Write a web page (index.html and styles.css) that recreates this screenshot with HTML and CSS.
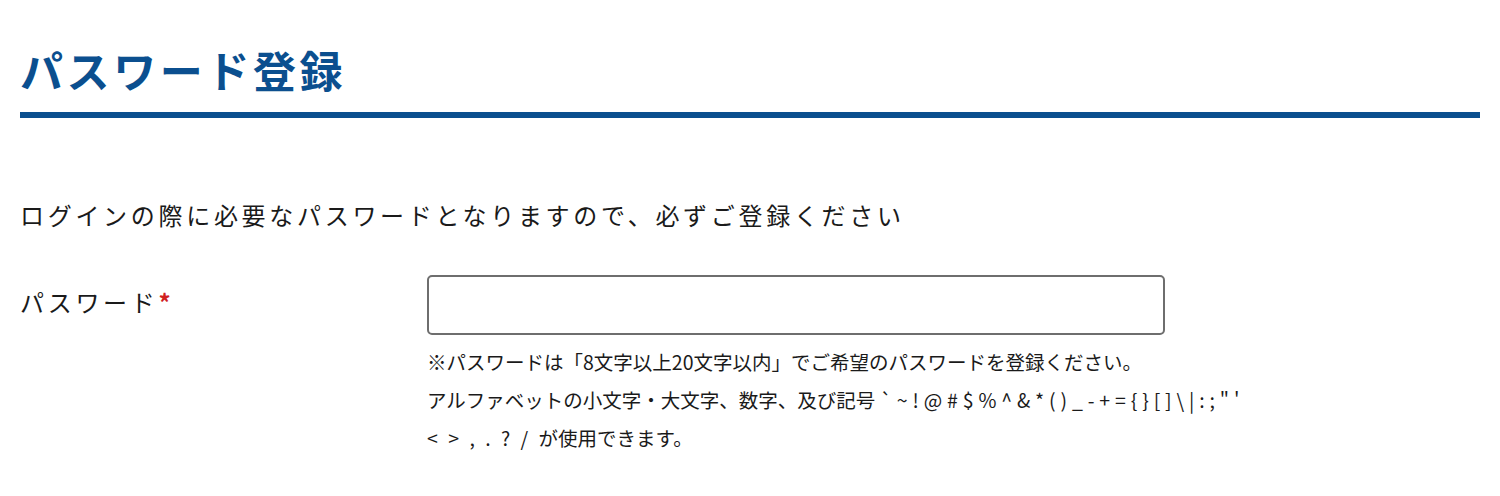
FILE: index.html
```html
<!DOCTYPE html>
<html lang="ja">
<head>
    <meta charset="UTF-8">
    <meta name="viewport" content="width=device-width, initial-scale=1.0">
    <title>パスワード登録</title>
    <link rel="stylesheet" href="styles.css">
</head>
<body>
    <div class="container">
        <h1 class="page-title">パスワード登録</h1>

        <p class="lead">ログインの際に必要なパスワードとなりますので、必ずご登録ください</p>

        <div class="form-row">
            <label class="form-label" for="password">パスワード<span class="required">*</span></label>
            <div class="form-field">
                <input type="password" id="password" class="text-input">
                <p class="help-text">
                    ※パスワードは「8文字以上20文字以内」でご希望のパスワードを登録ください。<br>
                    アルファベットの小文字・大文字、数字、及び記号 ` ~ ! @ # $ % ^ &amp; * ( ) _ - + = { } [ ] \ | : ; " '<br>
                    <span class="symbols">&lt; &gt; , . ? / </span>が使用できます。
                </p>
            </div>
        </div>
    </div>
</body>
</html>
```

FILE: styles.css
```css
body {
    margin: 0;
    padding: 0;
    background-color: #fff;
    color: #1a1a1a;
    font-family: "Noto Sans CJK JP", "Noto Sans", sans-serif;
}
.container {
    padding: 0 20px;
}
.page-title {
    margin: 0;
    padding: 40px 0 14px;
    font-size: 43px;
    line-height: 58px;
    font-weight: 700;
    letter-spacing: 3.6px;
    color: #0b4f8f;
    border-bottom: 6px solid #0b4f8f;
}
.lead {
    margin: 78px 0 0;
    font-size: 24px;
    line-height: 38px;
    letter-spacing: 3.7px;
}
.form-row {
    display: flex;
    align-items: flex-start;
    margin-top: 41px;
}
.form-label {
    width: 407px;
    flex-shrink: 0;
    font-size: 24px;
    line-height: 54px;
    letter-spacing: 3.7px;
}
.required {
    color: #d0201f;
    font-weight: 700;
}
.form-field {
    flex: 1;
}
.text-input {
    display: block;
    box-sizing: border-box;
    width: 738px;
    height: 60px;
    margin: 0;
    padding: 0 12px;
    border: 2px solid #6e6e6e;
    border-radius: 5px;
    font-size: 20px;
}
.help-text {
    margin: 8px 0 0;
    font-size: 19.5px;
    line-height: 38px;
    word-spacing: 0.5px;
}
.symbols {
    letter-spacing: 1px;
    word-spacing: 4px;
}
```
